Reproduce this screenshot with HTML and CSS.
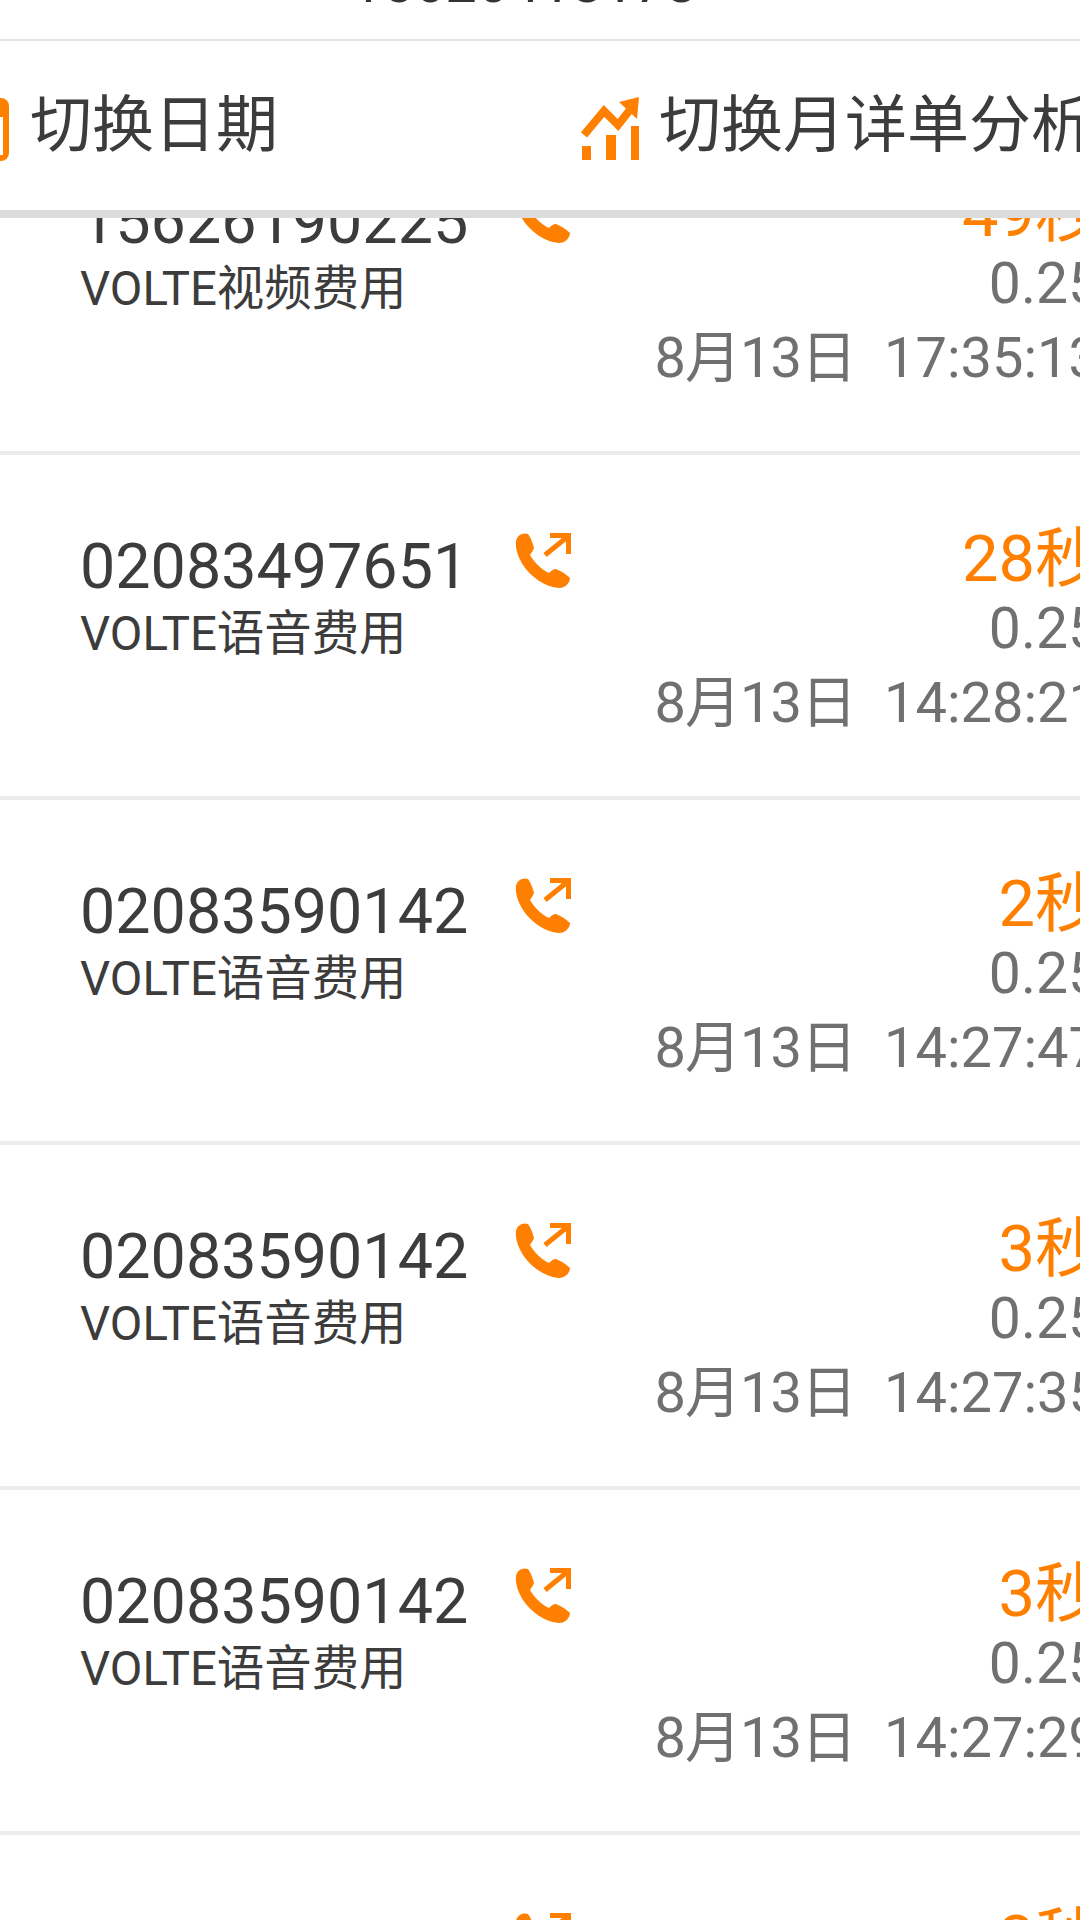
FILE: index.html
```html
<!DOCTYPE html>
<html lang="zh-CN">
<head>
  <meta charset="UTF-8" />
  <title>详单</title>
  <link rel="stylesheet" href="styles.css">
</head>
<body>
  <div class="page">
    <div class="account">15626418178</div>
    <div class="toolbar">
      <div class="tool tool-date">
        <svg class="tool-icon" viewBox="0 0 62 63"><rect x="0" y="0" width="62" height="63" rx="8" fill="#ff8000"/><rect x="6" y="19" width="50" height="38" fill="#fff"/><path d="M14 25h34v26H14zM14 34h34M14 42h34M31 25v26" fill="none" stroke="#ff8000" stroke-width="3"/></svg>
        <span>切换日期</span>
      </div>
      <div class="tool tool-month">
        <svg class="tool-chart" viewBox="0 0 58 63"><path d="M3 38L23 14L37 28L52 9" fill="none" stroke="#ff8000" stroke-width="8"/><path d="M38 5L58 0L56 22z" fill="#ff8000"/><path d="M1 49h9v14H1zM25 38h10v25H25zM50 29h8v34h-8z" fill="#ff8000"/></svg>
        <span>切换月详单分析</span>
      </div>
    </div>

    <div class="list">
      <div class="row">
        <div class="row-left">
          <div class="number">15626190225</div>
          <div class="kind">VOLTE视频费用</div>
        </div>
        <svg class="call-icon" viewBox="0 0 56 56"><use href="#call"/></svg>
        <div class="row-right">
          <div class="duration">49秒</div>
          <div class="fee">0.25</div>
          <div class="time"><span class="date">8月13日</span><span>17:35:13</span></div>
        </div>
      </div>
      <div class="row">
        <div class="row-left">
          <div class="number">02083497651</div>
          <div class="kind">VOLTE语音费用</div>
        </div>
        <svg class="call-icon" viewBox="0 0 56 56"><use href="#call"/></svg>
        <div class="row-right">
          <div class="duration">28秒</div>
          <div class="fee">0.25</div>
          <div class="time"><span class="date">8月13日</span><span>14:28:21</span></div>
        </div>
      </div>
      <div class="row">
        <div class="row-left">
          <div class="number">02083590142</div>
          <div class="kind">VOLTE语音费用</div>
        </div>
        <svg class="call-icon" viewBox="0 0 56 56"><use href="#call"/></svg>
        <div class="row-right">
          <div class="duration">2秒</div>
          <div class="fee">0.25</div>
          <div class="time"><span class="date">8月13日</span><span>14:27:47</span></div>
        </div>
      </div>
      <div class="row">
        <div class="row-left">
          <div class="number">02083590142</div>
          <div class="kind">VOLTE语音费用</div>
        </div>
        <svg class="call-icon" viewBox="0 0 56 56"><use href="#call"/></svg>
        <div class="row-right">
          <div class="duration">3秒</div>
          <div class="fee">0.25</div>
          <div class="time"><span class="date">8月13日</span><span>14:27:35</span></div>
        </div>
      </div>
      <div class="row">
        <div class="row-left">
          <div class="number">02083590142</div>
          <div class="kind">VOLTE语音费用</div>
        </div>
        <svg class="call-icon" viewBox="0 0 56 56"><use href="#call"/></svg>
        <div class="row-right">
          <div class="duration">3秒</div>
          <div class="fee">0.25</div>
          <div class="time"><span class="date">8月13日</span><span>14:27:29</span></div>
        </div>
      </div>
      <div class="row">
        <div class="row-left">
          <div class="number">02083590142</div>
          <div class="kind">VOLTE语音费用</div>
        </div>
        <svg class="call-icon" viewBox="0 0 56 56"><use href="#call"/></svg>
        <div class="row-right">
          <div class="duration">3秒</div>
          <div class="fee">0.25</div>
          <div class="time"><span class="date">8月13日</span><span>14:27:20</span></div>
        </div>
      </div>
    </div>
  </div>

  <svg class="defs" width="0" height="0">
    <defs>
      <g id="call">
        <path d="M1 8C2 2 8-1 13 1C16 5 18 11 19 15C18 18 16 20 15 22C20 30 26 36 34 40C36 38 38 36 41 36C46 38 51 41 55 45C55 50 50 55 44 55C30 54 16 44 8 32C3 24 0 15 1 8z" fill="#ff8000"/>
        <path d="M30 22L51 5" stroke="#ff8000" stroke-width="5" fill="none"/>
        <path d="M35 0H56V21H51V5H35z" fill="#ff8000"/>
      </g>
    </defs>
  </svg>
</body>
</html>
```

FILE: styles.css
```css
:root {
  --orange: #ff8000;
  --text: #3c3c3c;
  --muted: #707070;
  --font: "Roboto", "Noto Sans CJK SC", sans-serif;
}
* {
  box-sizing: border-box;
}
html, body {
  margin: 0;
  height: 100%;
}
body {
  background: #fff;
  font-family: var(--font);
  color: var(--text);
  overflow: hidden;
}
.page {
  width: 1080px;
  height: 1920px;
  overflow: hidden;
}
.defs {
  display: none;
}
.account {
  height: 40px;
  margin-top: -37px;
  margin-bottom: 36px;
  padding-right: 32px;
  font-size: 56px;
  line-height: 40px;
  text-align: center;
  color: #333;
}
.toolbar {
  position: relative;
  z-index: 2;
  height: 179px;
  display: flex;
  background: #fff;
  border-top: 2px solid #e4e4e4;
  border-bottom: 8px solid #dcdcdc;
}
.tool {
  display: flex;
  align-items: center;
  padding-bottom: 12px;
  font-size: 62px;
  white-space: nowrap;
}
.tool-date {
  width: 634px;
  margin-left: -53px;
  gap: 21px;
  flex-shrink: 0;
}
.tool-month {
  gap: 20px;
}
.tool-icon {
  width: 62px;
  height: 63px;
  margin-top: 20px;
}
.tool-chart {
  width: 58px;
  height: 63px;
  margin-top: 18px;
}
.list {
  margin-top: -108px;
}
.row {
  height: 345px;
  display: flex;
  padding: 78px 0 0 80px;
  border-bottom: 4px solid #ececec;
}
.row-left {
  width: 435px;
}
.number {
  font-size: 62.8px;
  line-height: 67px;
  white-space: nowrap;
}
.kind {
  font-size: 47.4px;
  line-height: 69px;
  white-space: nowrap;
}
.call-icon {
  width: 56px;
  height: 56px;
}
.row-right {
  flex: 1;
  display: flex;
  flex-direction: column;
  align-items: flex-end;
  white-space: nowrap;
  margin-right: -20px;
}
.duration {
  font-size: 65px;
  line-height: 53px;
  color: var(--orange);
}
.fee {
  margin-top: 8px;
  font-size: 57px;
  line-height: 70px;
  color: var(--muted);
}
.time {
  display: flex;
  gap: 28px;
  font-size: 56px;
  line-height: 78px;
  color: var(--muted);
}
.date {
  letter-spacing: -1px;
}
```
